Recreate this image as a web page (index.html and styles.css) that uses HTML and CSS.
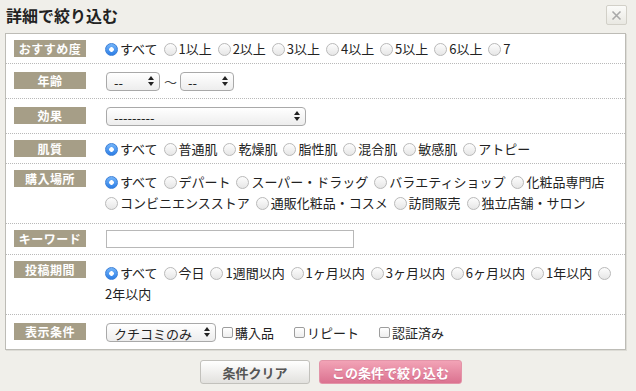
FILE: index.html
```html
<!DOCTYPE html>
<html lang="ja">
<head>
    <meta charset="UTF-8">
    <meta name="viewport" content="width=device-width, initial-scale=1.0">
    <title>詳細で絞り込む</title>
    <link rel="stylesheet" href="styles.css">
</head>
<body>

    <div class="header">
        <h2>詳細で絞り込む</h2>
        <button class="close" type="button">
            <svg width="11" height="11" viewBox="0 0 11 11"><path d="M1.5 1.5l8 8M9.5 1.5l-8 8" stroke="#a8a8a8" stroke-width="1.6" fill="none"/></svg>
        </button>
    </div>

    <div class="panel">
        <div class="row">
            <span class="label">おすすめ度</span>
            <div class="opts">
                <label class="opt"><input type="radio" name="rate" checked><wbr><span>すべて</span></label>
                <label class="opt"><input type="radio" name="rate"><wbr><span>1以上</span></label>
                <label class="opt"><input type="radio" name="rate"><wbr><span>2以上</span></label>
                <label class="opt"><input type="radio" name="rate"><wbr><span>3以上</span></label>
                <label class="opt"><input type="radio" name="rate"><wbr><span>4以上</span></label>
                <label class="opt"><input type="radio" name="rate"><wbr><span>5以上</span></label>
                <label class="opt"><input type="radio" name="rate"><wbr><span>6以上</span></label>
                <label class="opt"><input type="radio" name="rate"><wbr><span>7</span></label>
            </div>
        </div>

        <div class="row ctrl">
            <span class="label">年齢</span>
            <div class="ctrls">
                <span class="sel age"><select><option>--</option></select></span>
                <span class="tilde">～</span>
                <span class="sel age"><select><option>--</option></select></span>
            </div>
        </div>

        <div class="row ctrl">
            <span class="label">効果</span>
            <div class="ctrls">
                <span class="sel effect"><select><option>---------</option></select></span>
            </div>
        </div>

        <div class="row">
            <span class="label">肌質</span>
            <div class="opts">
                <label class="opt"><input type="radio" name="skin" checked><wbr><span>すべて</span></label>
                <label class="opt"><input type="radio" name="skin"><wbr><span>普通肌</span></label>
                <label class="opt"><input type="radio" name="skin"><wbr><span>乾燥肌</span></label>
                <label class="opt"><input type="radio" name="skin"><wbr><span>脂性肌</span></label>
                <label class="opt"><input type="radio" name="skin"><wbr><span>混合肌</span></label>
                <label class="opt"><input type="radio" name="skin"><wbr><span>敏感肌</span></label>
                <label class="opt"><input type="radio" name="skin"><wbr><span>アトピー</span></label>
            </div>
        </div>

        <div class="row multi">
            <span class="label">購入場所</span>
            <div class="opts">
                <label class="opt"><input type="radio" name="shop" checked><wbr><span>すべて</span></label>
                <label class="opt"><input type="radio" name="shop"><wbr><span>デパート</span></label>
                <label class="opt"><input type="radio" name="shop"><wbr><span>スーパー・ドラッグ</span></label>
                <label class="opt"><input type="radio" name="shop"><wbr><span>バラエティショップ</span></label>
                <label class="opt"><input type="radio" name="shop"><wbr><span>化粧品専門店</span></label>
                <label class="opt"><input type="radio" name="shop"><wbr><span>コンビニエンスストア</span></label>
                <label class="opt"><input type="radio" name="shop"><wbr><span>通販化粧品・コスメ</span></label>
                <label class="opt"><input type="radio" name="shop"><wbr><span>訪問販売</span></label>
                <label class="opt"><input type="radio" name="shop"><wbr><span>独立店舗・サロン</span></label>
            </div>
        </div>

        <div class="row ctrl kw">
            <span class="label">キーワード</span>
            <div class="ctrls">
                <input type="text" class="keyword">
            </div>
        </div>

        <div class="row multi">
            <span class="label">投稿期間</span>
            <div class="opts">
                <label class="opt"><input type="radio" name="period" checked><wbr><span>すべて</span></label>
                <label class="opt"><input type="radio" name="period"><wbr><span>今日</span></label>
                <label class="opt"><input type="radio" name="period"><wbr><span>1週間以内</span></label>
                <label class="opt"><input type="radio" name="period"><wbr><span>1ヶ月以内</span></label>
                <label class="opt"><input type="radio" name="period"><wbr><span>3ヶ月以内</span></label>
                <label class="opt"><input type="radio" name="period"><wbr><span>6ヶ月以内</span></label>
                <label class="opt"><input type="radio" name="period"><wbr><span>1年以内</span></label>
                <label class="opt"><input type="radio" name="period"><wbr><span>2年以内</span></label>
            </div>
        </div>

        <div class="row ctrl">
            <span class="label">表示条件</span>
            <div class="ctrls">
                <span class="sel show"><select><option>クチコミのみ</option></select></span>
                <label class="chk"><input type="checkbox"><span>購入品</span></label>
                <label class="chk"><input type="checkbox"><span>リピート</span></label>
                <label class="chk"><input type="checkbox"><span>認証済み</span></label>
            </div>
        </div>
    </div>

    <div class="footer">
        <button class="btn clear" type="button">条件クリア</button>
        <button class="btn submit" type="button">この条件で絞り込む</button>
    </div>

</body>
</html>
```

FILE: styles.css
```css
body {
    margin: 0;
    font-family: "Noto Sans CJK JP", "Noto Sans", sans-serif;
    font-size: 13px;
    color: #222;
    background-color: #f0efea;
}
.header {
    display: flex;
    justify-content: space-between;
    align-items: flex-start;
    height: 33px;
    padding: 5px 9px 0 6px;
    box-sizing: border-box;
}
.header h2 {
    margin: 0;
    font-size: 16px;
    line-height: 20px;
    font-weight: bold;
    color: #222;
}
.close {
    width: 21px;
    height: 20px;
    padding: 0;
    border: 1px solid #d2d0c8;
    border-radius: 2px;
    background: linear-gradient(#fbfbf9, #e9e8e2);
    display: flex;
    align-items: center;
    justify-content: center;
}
.panel {
    margin: 0 10px 0 5px;
    background: white;
    border: 1px solid #bdbcb6;
    box-shadow: 1px 1px 0 #dddcd6;
}
.row {
    display: flex;
    align-items: flex-start;
    padding: 6px 8px 4px;
    border-bottom: 1px dotted #b9b9b9;
}
.row:last-child {
    border-bottom: none;
    padding-bottom: 5px;
}
.row.ctrl {
    padding-top: 8px;
    padding-bottom: 7px;
}
.row.kw {
    padding-top: 6px;
    padding-bottom: 6px;
}
.row.multi {
    padding-bottom: 10px;
}
.label {
    flex-shrink: 0;
    width: 72px;
    height: 17px;
    margin-right: 19px;
    background: #a69e87;
    color: white;
    font-size: 12px;
    font-weight: bold;
    line-height: 17px;
    text-align: center;
    letter-spacing: 0.5px;
}
.opts {
    flex: 1;
    margin-top: -2px;
    line-height: 21px;
}
.row.multi .opts {
    margin-top: 1px;
}
.opt span {
    white-space: nowrap;
    margin-right: 3px;
}
.opt input {
    appearance: none;
    width: 13px;
    height: 13px;
    margin: 0 2px 0 0;
    border: 1px solid #b9b9b9;
    border-radius: 50%;
    background: linear-gradient(#fdfdfd, #e6e6e6);
    vertical-align: -2px;
}
.opt input:checked {
    border-color: #3d7fd6;
    background: radial-gradient(circle, #fff 2px, transparent 2.6px), linear-gradient(#74b5fa, #2c7ee6);
}
.ctrls {
    flex: 1;
    display: flex;
    align-items: center;
    padding-left: 1px;
}
.sel {
    position: relative;
    display: inline-block;
    height: 19px;
}
.sel select {
    appearance: none;
    width: 100%;
    height: 19px;
    margin: 0;
    padding: 0 0 0 7px;
    border: 1px solid #a9a9a9;
    border-radius: 4px;
    background: linear-gradient(#ffffff, #ededed);
    font-family: "Noto Sans CJK JP", sans-serif;
    font-size: 13px;
    color: #222;
}
.sel::before,
.sel::after {
    content: "";
    position: absolute;
    right: 6px;
    border-left: 3px solid transparent;
    border-right: 3px solid transparent;
}
.sel::before {
    top: 4px;
    border-bottom: 4px solid #222;
}
.sel::after {
    top: 10px;
    border-top: 4px solid #222;
}
.sel.age {
    width: 54px;
}
.sel.effect {
    width: 200px;
}
.sel.show {
    width: 110px;
    margin-right: 6px;
}
.tilde {
    margin: 0 3px 0 4px;
    color: #444;
}
.keyword {
    width: 248px;
    height: 18px;
    margin: 0;
    border: 1px solid #b8b8b8;
    box-sizing: border-box;
}
.chk {
    display: flex;
    align-items: center;
    margin-right: 20px;
}
.chk input {
    appearance: none;
    width: 11px;
    height: 11px;
    margin: 0 2px 0 0;
    border: 1px solid #9d9d9d;
    border-radius: 2px;
    background: linear-gradient(#fff, #eee);
}
.footer {
    display: flex;
    justify-content: center;
    gap: 9px;
    padding: 10px 0 0 26px;
}
.btn {
    height: 24px;
    border-radius: 3px;
    font-family: "Noto Sans CJK JP", sans-serif;
    font-size: 13px;
    font-weight: bold;
    cursor: pointer;
    padding: 0;
}
.clear {
    width: 110px;
    border: 1px solid #c2c1bc;
    background: linear-gradient(#ffffff, #e2e1de);
    color: #555;
}
.submit {
    width: 143px;
    border: 1px solid #e394a8;
    background: linear-gradient(#f2a3b6, #db7290);
    color: white;
    text-shadow: 0 1px 0 rgba(150, 50, 80, 0.3);
}
```
